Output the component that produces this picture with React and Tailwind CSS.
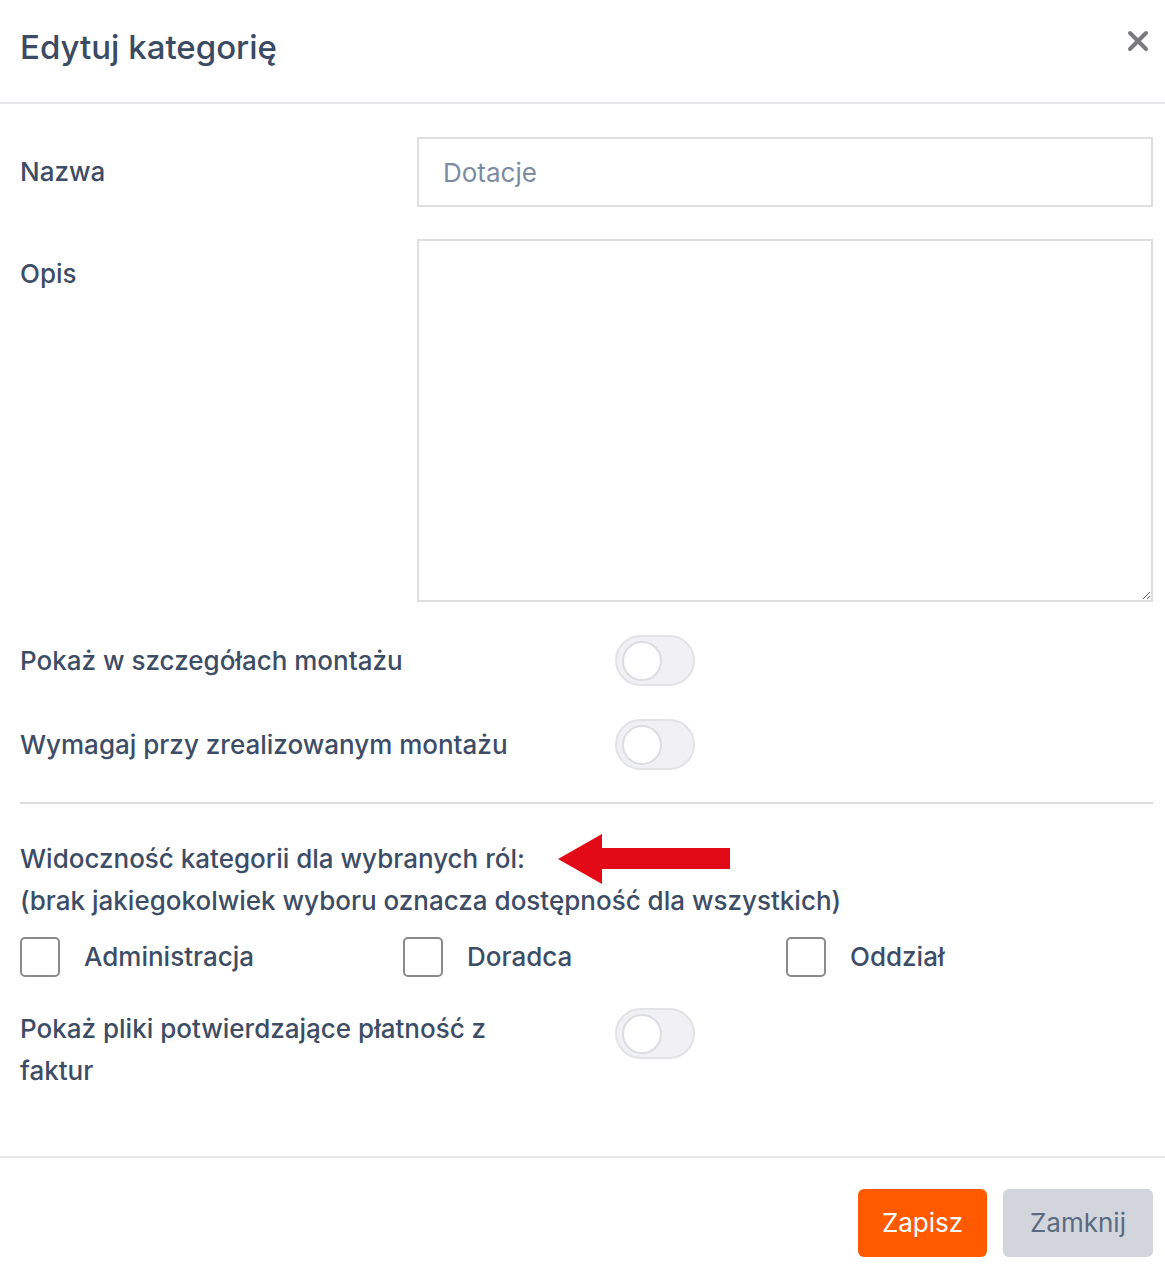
import React from "react";

function Toggle() {
  return (
    <div className="w-[80px] h-[51px] rounded-full bg-[#f1f1f3] border-2 border-[#e2e3e7] flex items-center pl-[5px] shrink-0">
      <div className="w-[40px] h-[40px] rounded-full bg-white border-2 border-[#dcdde2]" />
    </div>
  );
}

function Check({ label }) {
  return (
    <div className="flex items-center gap-[24px]">
      <div className="w-[40px] h-[40px] rounded-[5px] border-2 border-[#8a8a8a] bg-white" />
      <span>{label}</span>
    </div>
  );
}

export default function App() {
  return (
    <div
      className="w-[1165px] h-[1264px] bg-white text-[#3d4d65] text-[26px] leading-[42px] font-medium overflow-hidden"
      style={{ fontFamily: "Inter, Lato, sans-serif" }}
    >
      <div className="h-[104px] border-b-2 border-[#e6e7ea] flex items-center justify-between pl-[20px] pr-[16px] pb-[8px]">
        <h1 className="text-[33px] leading-[44px] text-[#3a4b63]">Edytuj kategorię</h1>
        <svg width="22" height="22" viewBox="0 0 22 22" className="mb-[12px]">
          <path d="M3 3 L19 19 M19 3 L3 19" stroke="#7a7a7e" strokeWidth="4" strokeLinecap="round" />
        </svg>
      </div>

      <div className="pl-[20px] pr-[12px] pt-[33px]">
        <div className="flex items-start">
          <div className="w-[397px] pt-[14px]">Nazwa</div>
          <input
            placeholder="Dotacje"
            className="flex-1 h-[70px] border-2 border-[#dedede] px-[24px] text-[26px] font-normal placeholder:text-[#7d8ba0] outline-none"
            style={{ fontFamily: "Inter, Lato, sans-serif" }}
          />
        </div>
        <div className="flex items-start mt-[32px]">
          <div className="w-[397px] pt-[14px]">Opis</div>
          <textarea className="flex-1 h-[363px] border-2 border-[#dedede] outline-none" />
        </div>

        <div className="flex items-center mt-[33px] h-[51px]">
          <div className="w-[595px]">Pokaż w szczegółach montażu</div>
          <Toggle />
        </div>
        <div className="flex items-center mt-[33px] h-[51px]">
          <div className="w-[595px]">Wymagaj przy zrealizowanym montażu</div>
          <Toggle />
        </div>

        <div className="border-t-2 border-[#dcdcde] mt-[32px]" />

        <div className="mt-[34px] flex items-center h-[42px]">
          <span>Widoczność kategorii dla wybranych ról:</span>
          <svg width="172" height="52" viewBox="0 0 172 52" className="ml-[33px] shrink-0">
            <polygon points="0,26 44,1 44,15 172,15 172,36 44,36 44,51" fill="#e30a17" />
          </svg>
        </div>
        <div>(brak jakiegokolwiek wyboru oznacza dostępność dla wszystkich)</div>

        <div className="grid grid-cols-[383px_383px_383px] mt-[14px]">
          <Check label="Administracja" />
          <Check label="Doradca" />
          <Check label="Oddział" />
        </div>

        <div className="flex items-start mt-[30px]">
          <div className="w-[520px] mr-[75px]">Pokaż pliki potwierdzające płatność z faktur</div>
          <Toggle />
        </div>
      </div>

      <div className="mt-[64px] border-t-2 border-[#e6e7ea] pt-[31px] flex justify-end gap-[16px] pr-[12px]">
        <button className="w-[129px] h-[68px] rounded-[6px] bg-[#ff5a00] text-white text-[26px] font-normal" style={{ fontFamily: "Inter, sans-serif" }}>Zapisz</button>
        <button className="w-[150px] h-[68px] rounded-[6px] bg-[#d2d5dc] text-[#5a6a80] text-[26px] font-normal" style={{ fontFamily: "Inter, sans-serif" }}>Zamknij</button>
      </div>
    </div>
  );
}
